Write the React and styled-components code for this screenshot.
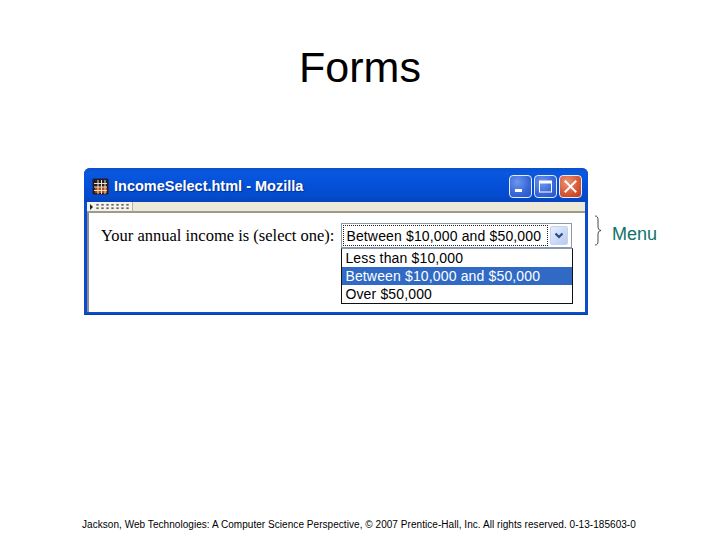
import React from "react";
import styled, { createGlobalStyle } from "styled-components";

const Global = createGlobalStyle`
  html, body { margin: 0; padding: 0; background: #fff; }
  #root { width: 720px; height: 540px; overflow: hidden; }
`;

const Slide = styled.div`
  width: 720px;
  height: 540px;
  display: flex;
  flex-direction: column;
  font-family: "Liberation Sans", Arial, sans-serif;
  color: #000;
`;

const Title = styled.h1`
  margin: 0;
  padding-top: 42px;
  height: 168px;
  box-sizing: border-box;
  text-align: center;
  font-size: 43px;
  line-height: 50px;
  font-weight: 400;
`;

const Figure = styled.div`
  display: flex;
  align-items: flex-start;
  padding-left: 84px;
`;

const Window = styled.div`
  width: 504px;
  height: 147px;
  box-sizing: border-box;
  display: flex;
  flex-direction: column;
  border-radius: 6px 6px 0 0;
  background: #0b4cc8;
  padding: 0 3px 3px;
  box-shadow: inset 0 -1px 0 #0a3ea8;
`;

const TitleBar = styled.div`
  height: 34px;
  margin: 0 -3px;
  padding: 3px 6px 0 8px;
  box-sizing: border-box;
  display: flex;
  align-items: center;
  gap: 5px;
  border-radius: 6px 6px 0 0;
  background: linear-gradient(180deg, #0a50cc 0%, #0a58e0 14%, #0450d8 50%, #044cd0 80%, #0644bc 100%);
`;

const AppIcon = styled.svg`
  width: 17px;
  height: 17px;
  flex: none;
`;

const Caption = styled.span`
  flex: 1;
  font-family: "Liberation Sans", Arial, sans-serif;
  font-weight: 700;
  font-size: 14.5px;
  line-height: 17px;
  color: #fff;
  text-shadow: 1px 1px 1px #0a2f90;
  white-space: nowrap;
`;

const Controls = styled.div`
  display: flex;
  gap: 2px;
`;

const WinButton = styled.div`
  width: 23px;
  height: 23px;
  box-sizing: border-box;
  display: flex;
  align-items: center;
  justify-content: center;
  border: 1px solid #e4ecfb;
  border-radius: 4px;
  background: ${(p) =>
    p.$close
      ? "radial-gradient(circle at 35% 30%, #ea9478 0%, #d85a35 55%, #b83a1c 100%)"
      : "radial-gradient(circle at 35% 30%, #6f95ec 0%, #3566d8 60%, #2a52c0 100%)"};
`;

const Toolbar = styled.div`
  height: 11px;
  flex: none;
  display: flex;
  align-items: stretch;
  background: #ece9d8;
  border-bottom: 2px solid #9d9a8a;
  box-sizing: border-box;
`;

const Grip = styled.div`
  width: 46px;
  display: flex;
  align-items: center;
  gap: 2px;
  padding-left: 3px;
  box-sizing: border-box;
  background: #f4f3ec;
  border-right: 1px solid #b5b2a2;
`;

const GripArrow = styled.span`
  width: 0;
  height: 0;
  border-left: 3px solid #222;
  border-top: 3px solid transparent;
  border-bottom: 3px solid transparent;
`;

const GripDots = styled.span`
  width: 36px;
  height: 7px;
  background-image: radial-gradient(circle, #666 1px, transparent 1.3px);
  background-size: 5px 3.500px;
`;

const Content = styled.div`
  flex: 1;
  display: flex;
  align-items: flex-start;
  gap: 7px;
  padding: 10px 0 0 12px;
  background: #fff;
  border-left: 2px solid #8d8d8d;
`;

const Label = styled.span`
  font-family: "Liberation Serif", "Times New Roman", serif;
  font-size: 16.5px;
  line-height: 25px;
  white-space: nowrap;
`;

const SelectWrap = styled.div`
  position: relative;
  width: 232px;
  flex: none;
`;

const SelectBox = styled.div`
  width: 231px;
  height: 25px;
  box-sizing: border-box;
  display: flex;
  align-items: center;
  gap: 2px;
  padding: 2px 3px 2px 1px;
  border: 1px solid #8a99ae;
  background: #fff;
`;

const SelectValue = styled.div`
  flex: 1;
  height: 19px;
  display: flex;
  align-items: center;
  padding-left: 2px;
  border: 1px dotted #222;
  font-size: 14px;
  letter-spacing: 0.15px;
  white-space: nowrap;
`;

const Arrow = styled.div`
  width: 16px;
  height: 17px;
  display: flex;
  align-items: center;
  justify-content: center;
  border: 1px solid #c3d3f3;
  border-radius: 2px;
  background: linear-gradient(135deg, #e6eefc, #b6caf2);
`;

const Menu = styled.div`
  position: absolute;
  top: 25px;
  left: 0;
  width: 232px;
  box-sizing: border-box;
  border: 1px solid #111;
  border-top-color: #8a99ae;
  background: #fff;
`;

const Option = styled.div`
  height: 18px;
  padding-left: 3px;
  font-size: 14px;
  line-height: 18px;
  letter-spacing: 0.15px;
  white-space: nowrap;
  background: ${(p) => (p.$active ? "#316ac5" : "#fff")};
  color: ${(p) => (p.$active ? "#fff" : "#000")};
`;

const Callout = styled.div`
  display: flex;
  align-items: flex-start;
  gap: 10px;
  margin: 47px 0 0 5px;
`;

const Brace = styled.svg`
  width: 9px;
  height: 31px;
  flex: none;
`;

const CalloutText = styled.span`
  padding-top: 9px;
  color: #0f7368;
  font-size: 18px;
  line-height: 20px;
`;

const Footer = styled.footer`
  margin-top: auto;
  padding: 0 0 9px 82px;
  font-size: 10px;
  line-height: 12px;
  letter-spacing: 0.05px;
  white-space: nowrap;
`;

const options = [
  "Less than $10,000",
  "Between $10,000 and $50,000",
  "Over $50,000",
];

export default function App() {
  return (
    <>
      <Global />
      <Slide>
        <Title>Forms</Title>
        <Figure>
          <Window>
            <TitleBar>
              <AppIcon viewBox="0 0 17 17">
                <rect x="0.500" y="0.500" width="16" height="16" rx="1" fill="#241c2c" />
                <rect x="3" y="9" width="12" height="6" fill="#b4481c" />
                <path d="M6 2v14M9.500 2v14M13 2v14M2 5.500h13M2 9h13M2 12.500h13" stroke="#f0e2b8" strokeWidth="1" />
              </AppIcon>
              <Caption>IncomeSelect.html - Mozilla</Caption>
              <Controls>
                <WinButton>
                  <svg width="15" height="15" viewBox="0 0 15 15">
                    <rect x="2" y="10" width="7" height="3" fill="#fff" />
                  </svg>
                </WinButton>
                <WinButton>
                  <svg width="15" height="15" viewBox="0 0 15 15">
                    <rect x="1.500" y="2" width="12" height="11" fill="none" stroke="#fff" strokeWidth="1" />
                    <rect x="1.500" y="2" width="12" height="2.500" fill="#fff" />
                  </svg>
                </WinButton>
                <WinButton $close>
                  <svg width="15" height="15" viewBox="0 0 15 15">
                    <path d="M2.500 2.500l10 10M12.500 2.500l-10 10" stroke="#fff" strokeWidth="2" strokeLinecap="square" />
                  </svg>
                </WinButton>
              </Controls>
            </TitleBar>
            <Toolbar>
              <Grip>
                <GripArrow />
                <GripDots />
              </Grip>
            </Toolbar>
            <Content>
              <Label>Your annual income is (select one):</Label>
              <SelectWrap>
                <SelectBox>
                  <SelectValue>{options[1]}</SelectValue>
                  <Arrow>
                    <svg width="10" height="8" viewBox="0 0 10 8">
                      <path d="M1.500 1.500L5 5l3.500-3.500" fill="none" stroke="#2a4a88" strokeWidth="2.200" />
                    </svg>
                  </Arrow>
                </SelectBox>
                <Menu>
                  {options.map((o, i) => (
                    <Option key={o} $active={i === 1}>
                      {o}
                    </Option>
                  ))}
                </Menu>
              </SelectWrap>
            </Content>
          </Window>
          <Callout>
            <Brace viewBox="0 0 9 31">
              <path d="M2 1c2.500 0 3 1.500 3 4v6c0 2.500 .5 4 3 4.500c-2.500 .5-3 2-3 4.500v6c0 2.500-.5 4-3 4" fill="none" stroke="#333" strokeWidth="0.9" />
            </Brace>
            <CalloutText>Menu</CalloutText>
          </Callout>
        </Figure>
        <Footer>Jackson, Web Technologies: A Computer Science Perspective, © 2007 Prentice-Hall, Inc. All rights reserved. 0-13-185603-0</Footer>
      </Slide>
    </>
  );
}
